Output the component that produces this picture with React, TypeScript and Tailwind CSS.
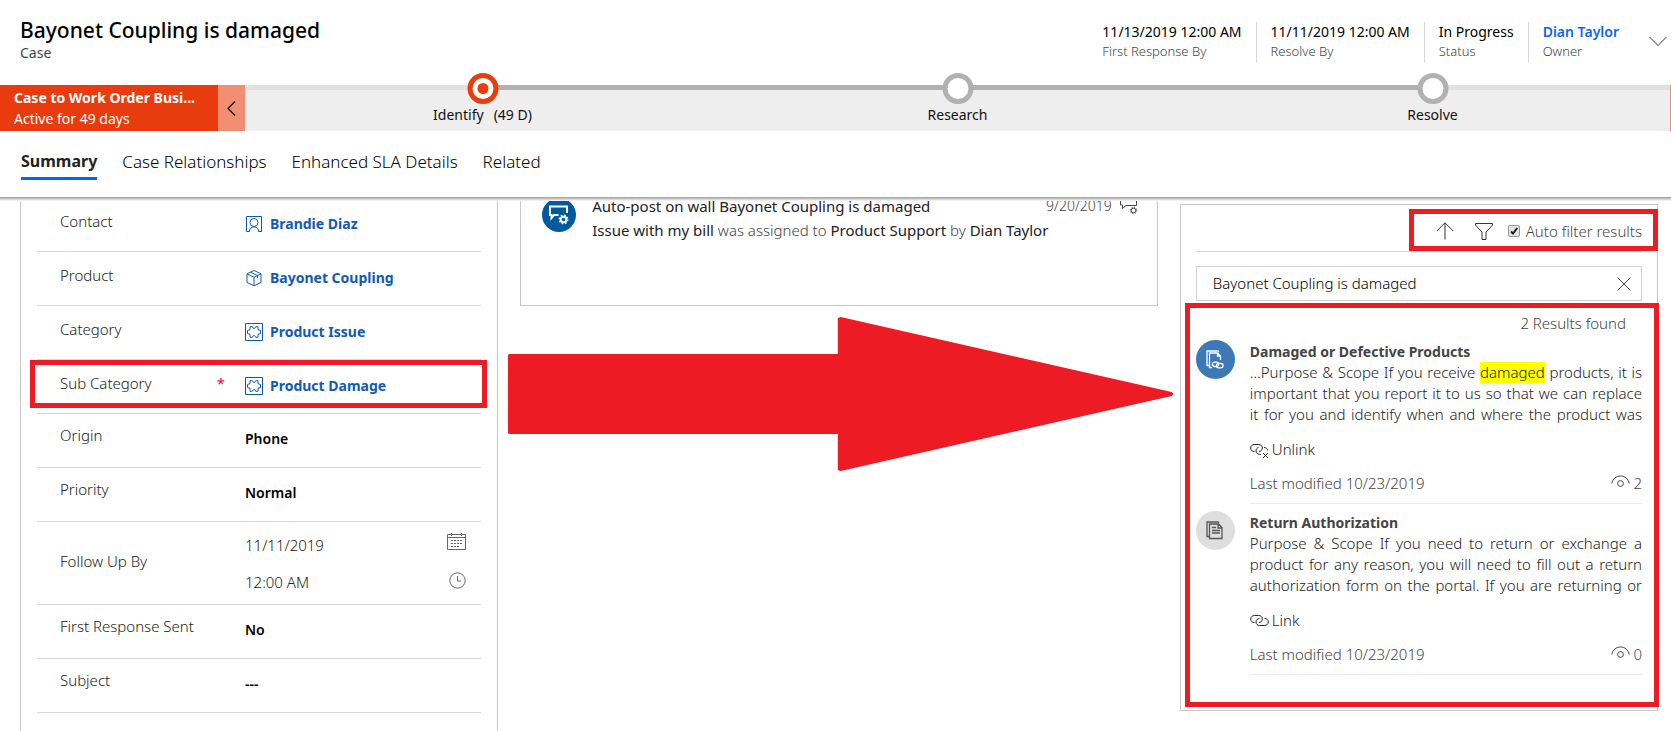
import type { ReactNode } from "react";
import clsx from "clsx";

const HEADER_FIELDS = [
  { value: "11/13/2019 12:00 AM", label: "First Response By" },
  { value: "11/11/2019 12:00 AM", label: "Resolve By" },
  { value: "In Progress", label: "Status" },
  { value: "Dian Taylor", label: "Owner", link: true },
];

const STAGES = [
  { name: "Identify", duration: "(49 D)", active: true },
  { name: "Research" },
  { name: "Resolve" },
];

const TABS = ["Summary", "Case Relationships", "Enhanced SLA Details", "Related"];

const ContactIcon = () => (
  <svg width="18" height="18" viewBox="0 0 18 18" fill="none" stroke="currentColor" aria-hidden="true">
    <path d="M4.5 16.5h-3v-15h15v15h-3" />
    <circle cx="9" cy="7.500" r="4" />
    <path d="M4 17c.3-3 2.300-5.200 5-5.200s4.700 2.200 5 5.200" />
  </svg>
);

const BoxIcon = () => (
  <svg width="18" height="18" viewBox="0 0 18 18" fill="none" stroke="currentColor" aria-hidden="true">
    <path d="m9 1.500 7 3.300v8.700l-7 3.300-7-3.300V4.800zM2 4.800l7 3.500 7-3.500M9 8.300v8.500M5.500 3.200l7 3.400v2.200" />
  </svg>
);

const PuzzleIcon = () => (
  <svg width="18" height="18" viewBox="0 0 18 18" fill="none" stroke="currentColor" aria-hidden="true">
    <path d="M.5.5h17v17H.5z" />
    <path d="M5 3.700h2.300L8.500 5.500h1l1.200-1.800H13v3l2.500.8v3l-2.500.8v3h-2.300l-1.200-1.800h-1l-1.200 1.800H5v-3l-2.500-.8v-3L5 6.700z" />
  </svg>
);

const CalendarIcon = () => (
  <svg width="19" height="18" viewBox="0 0 19 18" fill="none" stroke="currentColor" aria-hidden="true">
    <path d="M.5 1.500h18v15H.5zM.5 4.500h18M4.500 0v3M14.500 0v3" />
    <path d="M4 7.500h12M4 10.500h12M4 13.500h9" strokeDasharray="2 1" />
  </svg>
);

const ClockIcon = () => (
  <svg width="17" height="17" viewBox="0 0 17 17" fill="none" stroke="currentColor" aria-hidden="true">
    <circle cx="8.500" cy="8.500" r="7.700" />
    <path d="M8.500 4v5h3.500" />
  </svg>
);

const PostIcon = () => (
  <svg width="20" height="20" viewBox="0 0 20 20" fill="none" stroke="currentColor" aria-hidden="true">
    <path d="M9.500 10H5l-2.500 3v-3H1V1.500h17V8" strokeWidth="2" />
    <circle cx="14.500" cy="14.500" r="2.800" strokeWidth="2" />
    <circle cx="14.500" cy="14.500" r="4.200" strokeWidth="1.600" strokeDasharray="1.700 1.600" />
  </svg>
);

const PostTypeIcon = () => (
  <svg width="18" height="18" viewBox="0 0 18 18" fill="none" stroke="currentColor" aria-hidden="true">
    <path d="M.5 1v7h2v3.500L6 8.500h10.500V1" />
    <circle cx="13.500" cy="13.500" r="2.300" />
    <circle cx="13.500" cy="13.500" r="3.300" strokeDasharray="1.200 1.400" />
  </svg>
);

const ArticleIcon = ({ linked }: { linked?: boolean }) => (
  <svg width="18" height="19" viewBox="0 0 18 19" fill="none" stroke="currentColor" strokeWidth="1.300" aria-hidden="true">
    <path d="M3 15.500H1V1h11l1 1" />
    {linked ? (
      <>
        <path d="M6 17.500H3.500V3h8l3 3v4M11.500 3v3h3" />
        <rect x="6.500" y="12.200" width="6" height="4.300" rx="2.100" />
        <rect x="10.500" y="13.500" width="6.500" height="4.300" rx="2.100" />
      </>
    ) : (
      <path d="M3.500 3h9l3.500 3.500v11H3.500zM12 3v4h4M6 6.500h4M6 9.500h8M6 12h8" />
    )}
  </svg>
);

const LinkIcon = ({ unlink }: { unlink?: boolean }) => (
  <svg width="19" height="16" viewBox="0 0 19 16" fill="none" stroke="currentColor" aria-hidden="true">
    <path d="M4.500 9.500C2 9.500.7 8 .7 6S2.200 2.500 4.500 2.500h4.200c2.200 0 3.600 1.500 3.600 3.500s-1.500 3.500-3.400 3.500" />
    {unlink ? (
      <>
        <path d="M8.500 5.500C6.800 6 6 7.300 6 8.800c0 2 1.500 3.500 3.500 3.500h1.500M14 5.500c2 0 3.600 1.300 3.900 3" />
        <path d="m13 11 5 5M18 11l-5 5" />
      </>
    ) : (
      <path d="M9.500 5.500C7.500 5.500 6 7 6 9s1.500 3.500 3.600 3.500h4.800c2.200 0 3.900-1.500 3.900-3.500s-1.500-3.500-3.800-3.500" />
    )}
  </svg>
);

const EyeIcon = () => (
  <svg width="19" height="17" viewBox="0 0 19 17" fill="none" stroke="currentColor" aria-hidden="true">
    <path d="M.8 8.500C1.500 4 5 1 9.500 1S17.500 4 18.200 8.500" />
    <circle cx="9.500" cy="8.500" r="2.900" />
  </svg>
);

/* Red frame drawn round an area of the page */
const Highlight = ({ className }: { className: string }) => (
  <div className={clsx("pointer-events-none absolute border-5 border-[#ed1c24]", className)} />
);

const Header = () => (
  <header className="flex h-[85px] shrink-0 items-start justify-between pl-5 pr-1">
    <div className="pt-4">
      <h1 className="text-[21px] leading-7 font-medium text-black">Bayonet Coupling is damaged</h1>
      <p className="text-sm leading-[18px] text-[#444]">Case</p>
    </div>
    <div className="flex items-start pt-[22px]">
      {HEADER_FIELDS.map((field, i) => (
        <div
          key={field.label}
          className={clsx("h-[41px] pr-[14px]", i > 0 && "border-l border-[#d8d8d8] pl-[14px]")}
        >
          {field.link ? (
            <a href="#owner" className="block text-sm leading-5 font-semibold text-[#0b66f0]">
              {field.value}
            </a>
          ) : (
            <p className="text-sm leading-5 text-black">{field.value}</p>
          )}
          <p className="text-[13px] leading-[18px] font-light text-[#444]">{field.label}</p>
        </div>
      ))}
      <button type="button" aria-label="Expand header" className="ml-4 mt-[14px]">
        <svg width="18" height="11" viewBox="0 0 18 11" fill="none" stroke="#333" aria-hidden="true">
          <path d="m.5 1 8.500 8.500L17.500 1" />
        </svg>
      </button>
    </div>
  </header>
);

const ProcessBar = () => (
  <div className="flex h-[46px] shrink-0 border-r border-[#f08c70] bg-[#eee]">
    <div className="w-[218px] bg-[#e83c0f] py-0.5 pl-[14px] pr-4 text-sm leading-[21px] text-white">
      <p className="font-bold">Case to Work Order Busi...</p>
      <p>Active for 49 days</p>
    </div>
    <button type="button" aria-label="Collapse" className="flex w-[27px] items-center justify-center bg-[#f28e72]">
      <svg width="9" height="15" viewBox="0 0 9 15" fill="none" stroke="#111" strokeWidth="1.200" aria-hidden="true">
        <path d="M8 .5 1 7.500l7 7" />
      </svg>
    </button>
    <ol className="grid flex-1 grid-cols-3">
      {STAGES.map((stage, i) => (
        <li key={stage.name} className="relative text-center text-sm text-[#111]">
          <div className="flex h-[5px]">
            <div className={clsx("flex-1", i > 0 ? "bg-[#b1b1b1]" : "bg-[#e1e1e1]")} />
            <div className={clsx("flex-1", i < 2 ? "bg-[#b1b1b1]" : "bg-[#e1e1e1]")} />
          </div>
          <button
            type="button"
            aria-label={stage.name}
            className={clsx(
              "absolute -top-3 left-1/2 flex size-[31px] -translate-x-1/2 items-center justify-center rounded-full border-5 bg-white",
              stage.active ? "border-[#e83c0f]" : "border-[#b1b1b1]",
            )}
          >
            {stage.active && <span className="size-[11px] rounded-full bg-[#e83c0f]" />}
          </button>
          <div className="flex justify-center gap-2.5 pt-[15px] leading-5">
            <span>{stage.name}</span>
            {stage.duration && <span>{stage.duration}</span>}
          </div>
        </li>
      ))}
    </ol>
  </div>
);

const Tabs = () => (
  <nav className="relative z-10 flex h-[66px] shrink-0 items-start gap-[25px] bg-white pl-[21px] pt-[18px] text-[17px] leading-[25px] font-light text-black shadow-[0_1px_0_#a6a6a6,0_2px_0_#c0c0c0,0_3px_0_#dadada,0_4px_0_#f0f0f0]">
    {TABS.map((tab, i) => (
      <a
        key={tab}
        href={`#${tab}`}
        className={clsx("pb-[3px]", i === 0 && "border-b-3 border-[#0066ff] text-base leading-[25px] font-bold text-[#222]")}
      >
        {tab}
      </a>
    ))}
  </nav>
);

const Row = ({ label, required, tall, children }: { label: string; required?: boolean; tall?: boolean; children: ReactNode }) => {
  const plain = typeof children === "string";

  return (
    <div className={clsx("relative flex border-b border-[#d6d6d6] pl-[23px]", tall ? "h-[83px]" : "h-[54px]")}>
      <dt
        className={clsx(
          "flex w-[185px] shrink-0 justify-between pr-5 text-[15px] leading-5 font-light text-[#222]",
          tall ? "pt-[29px]" : plain ? "pt-[11px]" : "pt-[13px]",
        )}
      >
        {label}
        {required && <span className="font-normal text-[#e81123]">*</span>}
      </dt>
      <dd
        className={clsx(
          "min-w-0 flex-1 text-sm leading-5 font-semibold text-black",
          tall ? "pt-[13px]" : plain ? "pt-[15px]" : "pt-4",
        )}
      >
        {children}
      </dd>
      {required && <Highlight className="-left-[7px] -right-[6px] top-0 h-[48px]" />}
    </div>
  );
};

const RecordLink = ({ icon, children }: { icon: ReactNode; children: ReactNode }) => (
  <a href="#record" className="flex items-center gap-[7px] font-bold text-[#115ab3]">
    {icon}
    {children}
  </a>
);

const CaseDetails = () => (
  <dl className="border-x border-[#c8c8c8] px-4">
    <Row label="Contact">
      <RecordLink icon={<ContactIcon />}>Brandie Diaz</RecordLink>
    </Row>
    <Row label="Product">
      <RecordLink icon={<BoxIcon />}>Bayonet Coupling</RecordLink>
    </Row>
    <Row label="Category">
      <RecordLink icon={<PuzzleIcon />}>Product Issue</RecordLink>
    </Row>
    <Row label="Sub Category" required>
      <RecordLink icon={<PuzzleIcon />}>Product Damage</RecordLink>
    </Row>
    <Row label="Origin">Phone</Row>
    <Row label="Priority">Normal</Row>
    <Row label="Follow Up By" tall>
      <div className="flex flex-col gap-[17px] pr-[15px] text-[15px] leading-5 font-light text-[#222]">
        <div className="flex items-start justify-between">
          <input aria-label="Follow up date" defaultValue="11/11/2019" className="w-32 min-w-0" />
          <button type="button" aria-label="Pick a date" className="-mt-0.5 text-[#666]"><CalendarIcon /></button>
        </div>
        <div className="flex items-start justify-between">
          <input aria-label="Follow up time" defaultValue="12:00 AM" className="w-32 min-w-0" />
          <button type="button" aria-label="Pick a time" className="text-[#666]"><ClockIcon /></button>
        </div>
      </div>
    </Row>
    <Row label="First Response Sent">No</Row>
    <Row label="Subject">---</Row>
  </dl>
);

const Timeline = () => (
  <section className="relative">
    <article className="flex h-[108px] border border-t-0 border-[#c8c8c8] pl-[21px] pr-[19px] text-[15px]">
      <div className="flex size-[34px] items-center justify-center rounded-full bg-[#005a9e] text-white">
        <PostIcon />
      </div>
      <div className="ml-4 flex-1 leading-6 font-light">
        <div className="-mt-1 flex items-start justify-between">
          <p className="font-normal text-[#222]">Auto-post on wall Bayonet Coupling is damaged</p>
          <p className="flex items-start gap-2 text-sm leading-6 text-[#444]">
            9/20/2019
            <span className="pt-[3px]">
              <PostTypeIcon />
            </span>
          </p>
        </div>
        <p className="text-[#444]">
          <span className="font-normal text-[#222]">Issue with my bill</span> was assigned to{" "}
          <span className="font-normal text-[#222]">Product Support</span> by{" "}
          <span className="font-normal text-[#222]">Dian Taylor</span>
        </p>
      </div>
    </article>
    <svg
      className="pointer-events-none absolute -left-3 top-[119px] h-[154px] w-[calc(100%+28px)]"
      viewBox="0 0 666 154"
      preserveAspectRatio="none"
      aria-hidden="true"
    >
      <path d="M1 37h329V1l3-1 331 75 2 2-2 2-331 75-3-1v-36H1l-1-1V38z" fill="#ed1c24" />
    </svg>
  </section>
);

const Article = ({ title, views, linked, children }: { title: string; views: number; linked?: boolean; children: ReactNode }) => (
  <article className="flex gap-[15px]">
    <div
      className={clsx(
        "mt-[7px] flex size-[39px] shrink-0 items-center justify-center rounded-full",
        linked ? "bg-[#3b79b7] text-white" : "bg-[#dedede] text-[#555]",
      )}
    >
      <ArticleIcon linked={linked} />
    </div>
    <div className="h-[171px] min-w-0 flex-1 border-b border-[#ebebeb] pt-2">
      <h3 className="text-sm leading-[21px] font-bold text-[#444]">{title}</h3>
      <p className="text-justify leading-[21px] text-[#222] [text-align-last:justify]">{children}</p>
      <button type="button" className="mt-[14px] flex items-center gap-[3px] leading-[21px] text-[#222]">
        <LinkIcon unlink={linked} />
        {linked ? "Unlink" : "Link"}
      </button>
      <div className="mt-[13px] flex items-center justify-between leading-[21px]">
        <span>Last modified 10/23/2019</span>
        <span className="flex items-center gap-[3px]">
          <EyeIcon />
          {views}
        </span>
      </div>
    </div>
  </article>
);

const KnowledgeSearch = () => (
  <section className="relative mt-1.5 h-[507px] border border-[#c8c8c8] px-[15px] text-[15px] font-light text-[#444]">
    <div className="flex h-[47px] items-center justify-end border-b border-[#d6d6d6] pt-1.5">
      <button type="button" aria-label="Sort ascending">
        <svg width="18" height="18" viewBox="0 0 18 18" fill="none" stroke="#333" aria-hidden="true">
          <path d="M9 17.500V.8M.8 9 9 .8 17.200 9" />
        </svg>
      </button>
      <button type="button" aria-label="Filter" className="ml-[21px]">
        <svg width="18" height="17" viewBox="0 0 18 17" fill="none" stroke="#333" aria-hidden="true">
          <path d="M.5.5h17v1.700L11 9v7.500H7V9L.5 2.200z" />
        </svg>
      </button>
      <label className="ml-[15px] flex items-center gap-[6px]">
        <span className="grid size-3">
          <input
            type="checkbox"
            defaultChecked
            className="col-start-1 row-start-1 size-3 appearance-none rounded-xs border border-[#999] bg-[#e4e4e4]"
          />
          <svg className="pointer-events-none col-start-1 row-start-1" viewBox="0 0 12 12" fill="none" stroke="#222" strokeWidth="2" aria-hidden="true">
            <path d="m3 6.500 2 2 4.200-5.500" />
          </svg>
        </span>
        Auto filter results
      </label>
    </div>
    <div className="mt-[14px] flex h-[35px] items-center border border-[#d2d2d2] pl-4 pr-[10px]">
      <input aria-label="Search articles" defaultValue="Bayonet Coupling is damaged" className="min-w-0 flex-1 text-black outline-none" />
      <button type="button" aria-label="Clear search">
        <svg width="14" height="14" viewBox="0 0 14 14" fill="none" stroke="#444" aria-hidden="true">
          <path d="m.5.5 13 13M13.500.5l-13 13" />
        </svg>
      </button>
    </div>
    <p className="mt-3 pr-4 text-right leading-5">2 Results found</p>
    <Article title="Damaged or Defective Products" views={2} linked>
      ...Purpose &amp; Scope If you receive{" "}
      <mark className="inline-block bg-[#ff0] align-top leading-[21px] text-[#222]">damaged</mark> products, it is important
      that you report it to us so that we can replace it for you and identify when and where the product was
    </Article>
    <Article title="Return Authorization" views={0}>
      Purpose &amp; Scope If you need to return or exchange a product for any reason, you will need to fill out a return
      authorization form on the portal. If you are returning or
    </Article>
    <Highlight className="-right-px top-1 h-[42px] w-[249px]" />
    <Highlight className="-right-0.5 bottom-[3px] left-1 top-[98px]" />
  </section>
);

const App = () => (
  <div className="flex h-screen flex-col overflow-hidden bg-white font-['Noto_Sans','Open_Sans',sans-serif]">
    <Header />
    <ProcessBar />
    <Tabs />
    <main className="flex-1 overflow-hidden pt-px">
      <div className="grid h-full grid-cols-[3fr_4fr_3fr] gap-[22px] pl-5 pr-[13px]">
        <CaseDetails />
        <Timeline />
        <KnowledgeSearch />
      </div>
    </main>
  </div>
);

export default App;
